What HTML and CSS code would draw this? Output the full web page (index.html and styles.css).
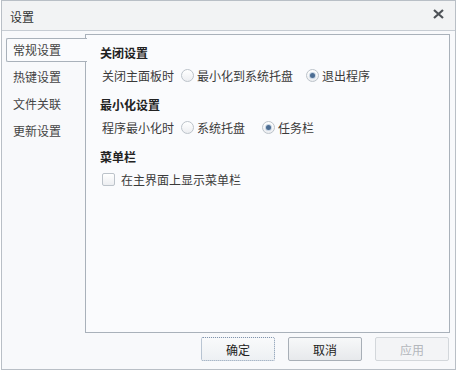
FILE: index.html
```html
<!DOCTYPE html>
<html lang="zh-CN">
<head>
    <meta charset="UTF-8">
    <title>设置</title>
    <link rel="stylesheet" href="styles.css">
</head>
<body>
    <div class="window">
        <div class="titlebar">
            <span class="title">设置</span>
            <span class="close">
                <svg width="11" height="10" viewBox="0 0 11 10">
                    <path d="M1 1 L10 9 M10 1 L1 9" stroke="#4e5257" stroke-width="2.2" fill="none"/>
                </svg>
            </span>
        </div>

        <div class="main">
            <div class="tabs">
                <div class="tab active">常规设置</div>
                <div class="tab">热键设置</div>
                <div class="tab">文件关联</div>
                <div class="tab">更新设置</div>
            </div>

            <div class="panel">
                <div class="section">
                    <div class="heading">关闭设置</div>
                    <div class="row">
                        <span class="label">关闭主面板时</span>
                        <span class="opt"><span class="radio"></span>最小化到系统托盘</span>
                        <span class="opt"><span class="radio checked"></span>退出程序</span>
                    </div>
                </div>

                <div class="section">
                    <div class="heading">最小化设置</div>
                    <div class="row row-min">
                        <span class="label">程序最小化时</span>
                        <span class="opt"><span class="radio"></span>系统托盘</span>
                        <span class="opt"><span class="radio checked"></span>任务栏</span>
                    </div>
                </div>

                <div class="section">
                    <div class="heading">菜单栏</div>
                    <div class="row">
                        <span class="check-opt"><span class="checkbox"></span>在主界面上显示菜单栏</span>
                    </div>
                </div>
            </div>
        </div>

        <div class="buttons">
            <button class="btn focused">确定</button>
            <button class="btn">取消</button>
            <button class="btn disabled">应用</button>
        </div>
    </div>
</body>
</html>
```

FILE: styles.css
```css
body {
    margin: 0;
    background-color: #ffffff;
    font-family: "Noto Sans CJK SC", "Noto Sans", sans-serif;
    font-size: 12px;
    color: #333;
}
.window {
    box-sizing: border-box;
    width: 455px;
    height: 370px;
    margin-left: 1px;
    border: 1px solid #b9bfc6;
    background-color: #f8f9fb;
    display: flex;
    flex-direction: column;
}
.titlebar {
    height: 29px;
    border-bottom: 1px solid #c6ccd3;
    background-color: #f2f3f4;
    display: flex;
    align-items: center;
    justify-content: space-between;
    padding: 0 11px 0 8px;
}
.title {
    font-size: 12px;
    color: #333;
    line-height: 16px;
    margin-top: 2px;
}
.close {
    display: flex;
    margin-top: -3px;
}
.main {
    display: flex;
    padding-top: 3px;
    padding-right: 4px;
}
.tabs {
    width: 84px;
    padding-top: 4px;
    display: flex;
    flex-direction: column;
    gap: 3px;
    box-sizing: border-box;
    padding-left: 4px;
    margin-right: -1px;
    position: relative;
    z-index: 1;
}
.tab {
    height: 24px;
    line-height: 24px;
    padding-left: 7px;
    color: #444;
}
.tab.active {
    box-sizing: border-box;
    height: 24px;
    line-height: 22px;
    padding-left: 6px;
    border: 1px solid #a9b1ba;
    border-right: none;
    border-radius: 2px 0 0 2px;
    background-color: #fafbfd;
    width: 81px;
}
.panel {
    box-sizing: border-box;
    width: 365px;
    height: 299px;
    border: 1px solid #a9b1ba;
    background-color: #fafbfd;
    padding: 10px 0 0 14px;
    display: flex;
    flex-direction: column;
    gap: 12px;
}
.section {
    display: flex;
    flex-direction: column;
    gap: 4px;
}
.heading {
    font-weight: bold;
    line-height: 16px;
    color: #222;
}
.row {
    display: flex;
    align-items: center;
    height: 20px;
    padding-left: 2px;
    color: #3a3a3a;
}
.label {
    margin-right: 7px;
}
.opt, .check-opt {
    display: flex;
    align-items: center;
}
.opt + .opt {
    margin-left: 13px;
}
.row-min .opt + .opt {
    margin-left: 17px;
}
.radio {
    box-sizing: border-box;
    width: 13px;
    height: 13px;
    border-radius: 50%;
    border: 1px solid #bcc3ca;
    background: linear-gradient(#ffffff, #eceef1);
    margin-right: 3px;
    display: flex;
    align-items: center;
    justify-content: center;
}
.radio.checked::after {
    content: "";
    width: 5px;
    height: 5px;
    border-radius: 50%;
    background-color: #4c6d93;
    box-shadow: 0 0 0 1px #c9d6e4;
}
.checkbox {
    box-sizing: border-box;
    width: 13px;
    height: 13px;
    border: 1px solid #bcc3ca;
    border-radius: 2px;
    background: linear-gradient(#ffffff, #eceef1);
    margin-right: 6px;
}
.buttons {
    display: flex;
    justify-content: flex-end;
    gap: 13px;
    padding: 4px 6px 0 0;
}
.btn {
    box-sizing: border-box;
    width: 74px;
    height: 24px;
    border: 1px solid #a8afb7;
    border-radius: 2px;
    background: linear-gradient(#f7f8f9, #e7e9ec);
    font-family: "Noto Sans CJK SC", "Noto Sans", sans-serif;
    font-size: 12px;
    color: #222;
    padding: 0;
}
.btn.focused {
    border: 1px dotted #7e93ad;
    background: linear-gradient(#f9fafb, #edf0f3);
}
.btn.disabled {
    border-color: #d3d7db;
    background: #f3f4f6;
    color: #b3b7bc;
}
```
